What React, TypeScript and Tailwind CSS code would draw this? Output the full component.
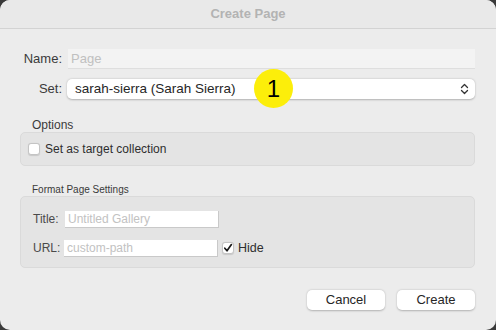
import React from 'react';

const font = { fontFamily: '"Liberation Sans", Arial, sans-serif' };

const Check: React.FC<{ checked?: boolean }> = ({ checked }) => (
    <span className="w-[12px] h-[12px] rounded-[3px] bg-white border border-[#c4c4c4] shadow-[0_0.5px_1px_rgba(0,0,0,0.12)] flex items-center justify-center shrink-0">
        {checked && (
            <svg width="10" height="10" viewBox="0 0 10 10">
                <path d="M1.8 5.2 L4 7.8 L8.4 1.6" fill="none" stroke="#1a1a1a" strokeWidth="1.7" strokeLinecap="round" strokeLinejoin="round" />
            </svg>
        )}
    </span>
);

export default function App() {
    return (
        <div className="w-[496px] h-[330px] bg-[#3a3a3a]" style={font}>
            <div className="h-full rounded-[10px] bg-[#ececec] flex flex-col overflow-hidden">
                {/* title bar */}
                <div className="h-[29px] shrink-0 bg-[#e9e9e9] border-b border-[#d3d3d3] flex items-center justify-center text-[13px] font-bold text-[#b3b3b3]">
                    Create Page
                </div>

                <div className="flex flex-col pl-[20px] pr-[21px] pt-[20px]">
                    {/* name / set */}
                    <div className="flex items-center gap-[6px] h-[20px]">
                        <span className="w-[42px] text-right text-[13px] text-[#3a3a3a]">Name:</span>
                        <div className="flex-1 h-[20px] bg-[#f3f3f3] border-b border-[#dedede] flex items-center px-[3px] text-[13px] text-[#c0c0c0]">
                            Page
                        </div>
                    </div>
                    <div className="flex items-center gap-[5px] h-[20px] mt-[10px] relative">
                        <span className="w-[42px] text-right text-[13px] text-[#3a3a3a]">Set:</span>
                        <div className="flex-1 h-[20px] bg-white rounded-[5px] shadow-[0_0.5px_2px_rgba(0,0,0,0.25)] flex items-center justify-between pl-[8px] pr-[6px] text-[13.5px] text-[#262626]">
                            <span>sarah-sierra (Sarah Sierra)</span>
                            <svg width="9" height="12" viewBox="0 0 9 12">
                                <path d="M1.5 4.5 L4.5 1.5 L7.5 4.5 M1.5 7.5 L4.5 10.5 L7.5 7.5" fill="none" stroke="#333" strokeWidth="1.3" strokeLinecap="round" strokeLinejoin="round" />
                            </svg>
                        </div>
                        <div className="absolute left-[234px] top-[-10px] w-[39px] h-[39px] rounded-full bg-[#fcee0a] flex items-center justify-center text-[24px] text-black">
                            1
                        </div>
                    </div>

                    {/* options */}
                    <div className="mt-[19px] pl-[12px] text-[12px] leading-[14px] text-[#3a3a3a]">Options</div>
                    <div className="h-[34px] rounded-[5px] bg-[#e4e4e4] border border-[#dadada] flex items-center gap-[5px] pl-[7px]">
                        <Check />
                        <span className="text-[12px] text-[#2e2e2e]">Set as target collection</span>
                    </div>

                    {/* format page settings */}
                    <div className="mt-[17px] pl-[12px] text-[10px] leading-[13px] text-[#3a3a3a]">Format Page Settings</div>
                    <div className="h-[72px] rounded-[5px] bg-[#e4e4e4] border border-[#dadada] flex flex-col gap-[13px] pt-[14px] pl-[12px]">
                        <div className="flex items-center h-[16px]">
                            <span className="w-[26px] text-[12px] text-[#4a4a4a]">Title:</span>
                            <div className="ml-[6px] w-[154px] h-[17px] bg-white border-b border-r border-[#c9c9c9] flex items-center px-[3px] text-[12px] text-[#c2c2c2]">
                                Untitled Gallery
                            </div>
                        </div>
                        <div className="flex items-center h-[16px]">
                            <span className="w-[25px] text-[12px] text-[#4a4a4a]">URL:</span>
                            <div className="ml-[6px] w-[154px] h-[17px] bg-white border-b border-r border-[#c9c9c9] flex items-center px-[3px] text-[12px] text-[#c2c2c2]">
                                custom-path
                            </div>
                            <span className="ml-[4px]"><Check checked /></span>
                            <span className="ml-[4px] text-[12.5px] text-[#2e2e2e]">Hide</span>
                        </div>
                    </div>

                    {/* buttons */}
                    <div className="mt-[22px] flex justify-end gap-[12px]">
                        <button className="w-[78px] h-[20px] bg-white rounded-[5px] shadow-[0_0.5px_2px_rgba(0,0,0,0.25)] text-[13px] text-[#262626]">Cancel</button>
                        <button className="w-[78px] h-[20px] bg-white rounded-[5px] shadow-[0_0.5px_2px_rgba(0,0,0,0.25)] text-[13px] text-[#262626]">Create</button>
                    </div>
                </div>
            </div>
        </div>
    );
}
